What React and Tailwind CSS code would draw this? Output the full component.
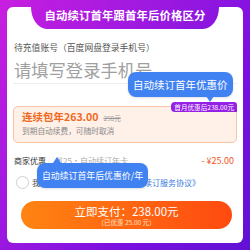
import React from "react";

const BG = "bg-[linear-gradient(125deg,#c81fe0_0%,#9a18e0_40%,#7a10e0_70%,#6012d4_100%)] bg-fixed";

const Bubble = ({ className, tail, children }) => (
  <div className={`absolute flex items-center rounded-[8px] bg-[#4182f2] text-white shadow-sm ${className}`}>
    {children}
    {tail}
  </div>
);

export default function App() {
  return (
    <div className={`w-[250px] h-[250px] p-[7px] overflow-hidden font-['Noto_Sans_CJK_SC',sans-serif] ${BG}`}>
      <div className="relative h-full rounded-[6px] bg-white px-[6px] pt-[35px]">
        {/* header tab */}
        <div className={`absolute left-[24px] right-[24px] top-[-7px] h-[29px] flex items-center justify-center rounded-bl-[16px_22px] rounded-br-[16px_22px] ${BG}`}>
          <span className="text-[11.4px] font-bold text-white tracking-[0.1px] leading-none pt-[2px]">
            自动续订首年跟首年后价格区分
          </span>
        </div>

        <div className="pl-[1px] text-[8.8px] leading-[12px] text-[#555]">待充值账号（百度网盘登录手机号）</div>
        <div className="mt-[5px] border-b border-[#eeeeee] pb-[2px] pl-[1px] text-[17.3px] leading-[22px] text-[#a0a0a0]">
          请填写登录手机号
        </div>

        {/* plan box */}
        <div className="relative mt-[22px] h-[37px] rounded-[5px] border border-[#f7c4a6] bg-[#fff0e8] px-[8px] pt-[3px]">
          <div className="flex items-baseline gap-[5px]">
            <span className="text-[10.5px] font-bold leading-[14px] text-[#f06a1e]">连续包年263.00</span>
            <span className="text-[6.5px] text-[#999] line-through">298元</span>
          </div>
          <div className="mt-[1px] text-[7.7px] leading-[12px] text-[#888]">到期自动续费，可随时取消</div>
          <div className="absolute right-[-1px] top-[-5px] h-[10px] px-[3px] flex items-center rounded-tl-[4px] rounded-tr-[3px] rounded-bl-[4px] bg-[#9520e6] text-[6.6px] leading-none text-white">
            首月优惠后238.00元
          </div>
        </div>

        {/* merchant discount */}
        <div className="mt-[12px] flex items-center h-[12px] pl-[1px] text-[8px]">
          <span className="text-[#333]">商家优惠</span>
          <span className="ml-[9px] text-[#aaa]">省25·自动续订年卡</span>
          <span className="ml-auto mr-[3px] text-[9px] text-[#f0541e]">- ¥25.00</span>
        </div>

        {/* agreement */}
        <div className="mt-[9px] flex items-center pl-[3px] text-[8px] leading-none">
          <span className="h-[13px] w-[13px] rounded-full border border-[#cfcfcf]" />
          <span className="ml-[3px] text-[#555]">我已阅读并同意</span>
          <span className="text-[#3a7be0]">《百度网盘自动续订服务协议》</span>
        </div>

        {/* pay button */}
        <div className="mt-[12px] ml-[8px] mr-[5px] h-[28px] flex flex-col items-center justify-center rounded-full bg-[linear-gradient(90deg,#ff8412,#ff4a10)] text-white">
          <span className="text-[11.5px] leading-[12px]">立即支付：238.00元</span>
          <span className="text-[6.5px] leading-[8px] mt-[1px] text-[#ffe2d0]">（已优惠 25.00 元）</span>
        </div>

        {/* tooltips */}
        <Bubble
          className="left-[121px] top-[65px] w-[105px] h-[25px] pl-[5px] text-[10.5px]"
          tail={<span className="absolute left-[78px] bottom-[-5px] h-0 w-0 border-x-[4px] border-t-[6px] border-x-transparent border-t-[#4182f2]" />}
        >
          自动续订首年优惠价
        </Bubble>
        <Bubble
          className="left-[30px] top-[156px] w-[111px] h-[25px] pl-[5px] text-[8.9px]"
          tail={<span className="absolute left-[16px] top-[-6px] h-0 w-0 border-x-[4px] border-b-[6px] border-x-transparent border-b-[#4182f2]" />}
        >
          自动续订首年后优惠价/年
        </Bubble>
      </div>
    </div>
  );
}
